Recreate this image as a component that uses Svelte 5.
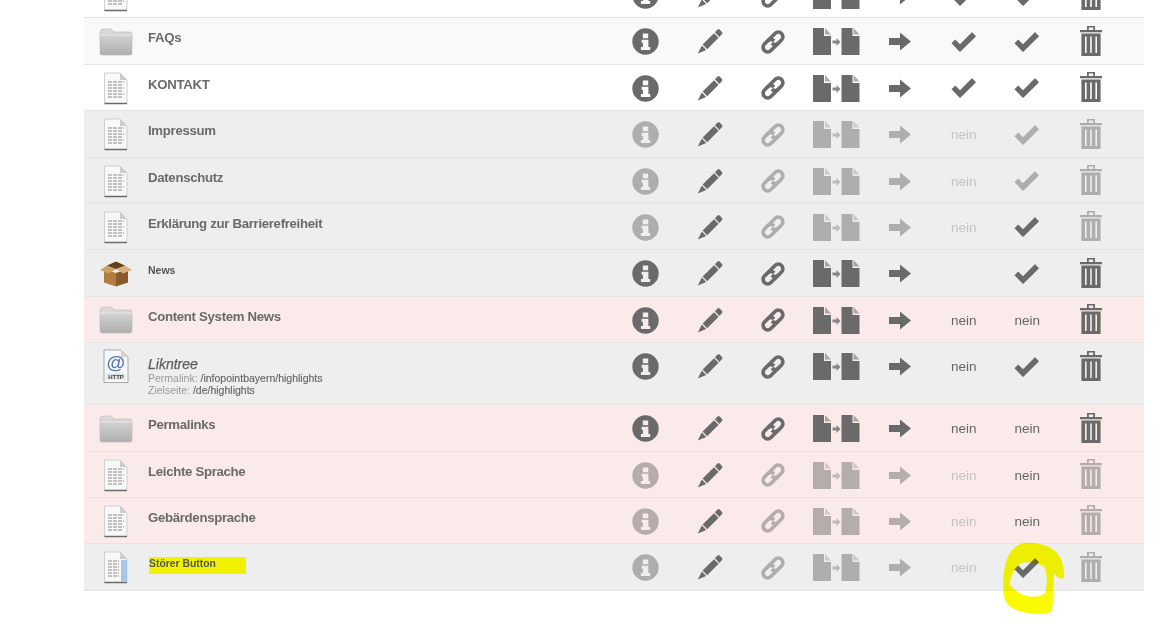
<script>
  const rows = [
    { icon: 'file', title: '', bg: 'white', dim: false, a: 'check', b: 'check' },
    { icon: 'folder', title: 'FAQs', bg: 'soft', dim: false, a: 'check', b: 'check' },
    { icon: 'file', title: 'KONTAKT', bg: 'white', dim: false, a: 'check', b: 'check' },
    { icon: 'file', title: 'Impressum', bg: 'gray', dim: true, a: 'neinoff', b: 'checkoff' },
    { icon: 'file', title: 'Datenschutz', bg: 'gray', dim: true, a: 'neinoff', b: 'checkoff' },
    { icon: 'file', title: 'Erklärung zur Barrierefreiheit', bg: 'gray', dim: true, a: 'neinoff', b: 'check' },
    { icon: 'box', title: 'News', bg: 'gray', dim: false, a: '', b: 'check', kind: 'small' },
    { icon: 'folder', title: 'Content System News', bg: 'pink', dim: false, a: 'nein', b: 'nein' },
    { icon: 'http', title: 'Likntree', bg: 'gray', dim: false, a: 'nein', b: 'check', kind: 'link' },
    { icon: 'folder', title: 'Permalinks', bg: 'pink', dim: false, a: 'nein', b: 'nein' },
    { icon: 'file', title: 'Leichte Sprache', bg: 'pink', dim: true, a: 'neinoff', b: 'nein' },
    { icon: 'file', title: 'Gebärdensprache', bg: 'pink', dim: true, a: 'neinoff', b: 'nein' },
    { icon: 'store', title: 'Störer Button', bg: 'gray', dim: true, a: 'neinoff', b: 'check', kind: 'mark' }
  ];
  const lines = [10, 13, 16, 19, 22, 25];
</script>

{#snippet typeIcon(kind)}
  {#if kind === 'folder'}
    <svg class="type" width="34" height="28" viewBox="0 0 34 28">
      <defs>
        <linearGradient id="fold" x1="0" y1="0" x2="0" y2="1">
          <stop offset="0" stop-color="#dedede" /><stop offset="1" stop-color="#aeaeae" />
        </linearGradient>
      </defs>
      <path d="M1 5Q1 1 4 1H12L15 4H31Q33 4 33 7V25Q33 27 31 27H3Q1 27 1 25Z" fill="url(#fold)" stroke="#b5b5b5" stroke-width=".6" />
      <path d="M1 7H33" stroke="#e8e8e8" />
    </svg>
  {:else if kind === 'box'}
    <svg class="type" width="34" height="26" viewBox="0 0 34 26">
      <path d="M5 8L17 12V25.5L5 21.5Z" fill="#b07c40" />
      <path d="M29 8L17 12V25.5L29 21.5Z" fill="#8a5a28" />
      <path d="M1 9L8 4.5L17 8L10 12.5Z" fill="#cda06a" />
      <path d="M33 9L26 4.5L17 8L24 12.5Z" fill="#d8b07c" />
      <path d="M8 4.5L17 .5L26 4.5L17 8Z" fill="#654018" />
    </svg>
  {:else if kind === 'http'}
    <svg class="type" width="26" height="35" viewBox="0 0 26 35">
      <path d="M1 1H18L25 8V33.5H1Z" fill="#f7f9fc" stroke="#a8a8a8" />
      <path d="M18 1L25 8H18Z" fill="#d4d4d4" />
      <text x="12.5" y="19.5" class="at">@</text>
      <rect x="3.5" y="24" width="19" height="7" fill="#e2e5ea" />
      <text x="13" y="30" class="http">HTTP</text>
    </svg>
  {:else}
    <svg class="type" width="26" height="33" viewBox="0 0 26 33">
      <path d="M1.5 1H17L24 8V31.5H1.5Z" fill="#f8f8f8" stroke="#cfcfcf" />
      <path d="M17 1L24 8H17Z" fill="#cccccc" />
      <path d="M1.5 31.5H24" stroke="#6a6a6a" stroke-width="1.5" />
      {#each lines as y, i}
        <path d={`M5 ${y}H${kind === 'store' ? 16 : i % 2 ? 20 : 21}`} stroke="#8a8a8a" stroke-dasharray="4 1" />
      {/each}
      {#if kind === 'store'}
        <rect x="18" y="9" width="6" height="22" fill="#a6c6e4" />
      {/if}
    </svg>
  {/if}
{/snippet}

{#snippet info()}
  <svg width="27" height="27" viewBox="0 0 27 27">
    <path fill-rule="evenodd" d="M13.5 .3a13.2 13.2 0 1 0 0 26.4a13.2 13.2 0 0 0 0-26.4ZM10.8 5.6h5.4v4.6h-5.4ZM9.6 11.8h6.8v7.2h1.8v3H8.9v-3h2v-4.2H9.6Z" />
  </svg>
{/snippet}

{#snippet pencil()}
  <svg class="nudge" width="26" height="27" viewBox="0 0 26 27">
    <path d="M5.6 17.6L17 6.2L21.6 10.8L10.2 22.2Z" />
    <path d="M17.9 5.3L20.6 2.6Q21.6 1.6 22.6 2.6L25 5Q26 6 25 7L22.4 9.9Z" />
    <path d="M4.8 18.6L9.2 23L.8 26.6Z" />
  </svg>
{/snippet}

{#snippet link()}
  <svg width="26" height="28" viewBox="0 0 26 28">
    <g transform="translate(13 14) rotate(-45)" fill="none" stroke-width="3.6" class="chain">
      <path d="M2.5 4.6H-7.5A4.6 4.6 0 0 1-7.5-4.6H-3A4.6 4.6 0 0 1 1.6 0" />
      <path d="M-2.5-4.6H7.5A4.6 4.6 0 0 1 7.5 4.6H3A4.6 4.6 0 0 1-1.6 0" />
    </g>
  </svg>
{/snippet}

{#snippet copy()}
  <svg width="47" height="27" viewBox="0 0 47 27">
    <path d="M0 0H11V8H18V27H0Z" />
    <path d="M12 0L18 6.5H12Z" opacity=".55" />
    <path d="M28.5 0H39.5V8H46.5V27H28.5Z" />
    <path d="M40.5 0L46.5 6.5H40.5Z" opacity=".55" />
    <path d="M19.5 12.5H23.5V10L27.5 14L23.5 18V15.5H19.5Z" opacity=".8" />
  </svg>
{/snippet}

{#snippet arrow()}
  <svg width="22" height="19" viewBox="0 0 22 19">
    <path d="M0 6H11V.5L22 9.5L11 18.5V13H0Z" />
  </svg>
{/snippet}

{#snippet check()}
  <svg width="25" height="20" viewBox="0 0 25 20">
    <path d="M.5 11.2L4.2 7.5L9 12.2L20.6.5Q21 .2 21.4 .6L24.6 3.8Q25 4.3 24.6 4.7L9.6 19.5Q9 20 8.4 19.5Z" />
  </svg>
{/snippet}

{#snippet trash()}
  <svg class="bin" width="22" height="30" viewBox="0 0 22 30">
    <path fill-rule="evenodd" d="M7 0H15V4H22V6.2H0V4H7ZM8.8 1.6V4H13.2V1.6Z" />
    <path fill-rule="evenodd" d="M1.4 7.6H20.6V30H1.4ZM5 10.5V27H6.6V10.5ZM10.2 10.5V27H11.8V10.5ZM15.4 10.5V27H17V10.5Z" />
  </svg>
{/snippet}

<main class="list">
  {#each rows as r}
    <section class={`row ${r.bg} ${r.kind === 'link' ? 'tall' : ''}`}>
      <div class="type-cell">{@render typeIcon(r.icon)}</div>
      <div class="title-cell">
        {#if r.kind === 'small'}
          <span class="small">{r.title}</span>
        {:else if r.kind === 'mark'}
          <span class="mark">{r.title}</span>
        {:else if r.kind === 'link'}
          <em class="name">{r.title}</em>
          <p class="meta">Permalink: <b>/infopointbayern/highlights</b></p>
          <p class="meta">Zielseite: <b>/de/highlights</b></p>
        {:else}
          <span class="name">{r.title}</span>
        {/if}
      </div>
      <div class="cell" class:off={r.dim}>{@render info()}</div>
      <div class="cell">{@render pencil()}</div>
      <div class="cell" class:off={r.dim}>{@render link()}</div>
      <div class="cell" class:off={r.dim}>{@render copy()}</div>
      <div class="cell" class:off={r.dim}>{@render arrow()}</div>
      <div class="cell">
        {#if r.a === 'check'}
          {@render check()}
        {:else if r.a === 'nein'}
          <span class="no">nein</span>
        {:else if r.a === 'neinoff'}
          <span class="no faint">nein</span>
        {/if}
      </div>
      <div class="cell" class:off={r.b === 'checkoff'}>
        {#if r.b === 'nein'}
          <span class="no">nein</span>
        {:else}
          {@render check()}
        {/if}
      </div>
      <div class="cell" class:off={r.dim}>{@render trash()}</div>
    </section>
  {/each}
</main>

<svg class="scribble" width="180" height="100" viewBox="0 0 540 300" aria-hidden="true">
  <path fill-rule="evenodd" d="M140 38C185 38 225 50 242 85C250 105 254 125 252 145C240 147 230 144 222 130C220 165 222 205 215 245C190 254 150 254 115 242C85 232 70 215 70 180C68 130 75 75 105 52C115 43 128 38 140 38ZM125 98C105 110 90 140 90 162C100 182 130 200 160 200C175 200 188 196 195 188C202 165 203 135 192 108C170 98 145 94 125 98Z" />
</svg>

<style>
  :global(body) {
    margin: 0;
    background: #fff;
    overflow: hidden;
  }
  .list {
    margin: -28px 0 0 84px;
    width: 1060px;
    font-family: "Liberation Sans", Arial, sans-serif;
    color: #666;
    filter: blur(.3px);
  }
  .row {
    display: grid;
    grid-template-columns: 64px 466px repeat(8, 63.5px) 1fr;
    box-sizing: border-box;
    height: 46.4px;
    border-bottom: 1px solid #e4e4e4;
  }
  .row.tall { height: 62px; }
  .white { background: #fff; }
  .soft { background: #f9f9f9; }
  .gray { background: #eee; }
  .pink { background: #fbeaea; }
  .type-cell, .cell {
    display: flex;
    align-items: center;
    justify-content: center;
    height: 47px;
  }
  .cell svg { fill: #6a6a6a; }
  .cell .chain { stroke: #6a6a6a; }
  .cell .bin { margin: 0 0 2px 1.5px; }
  .cell .nudge { margin: 0 0 2px 1px; }
  .off { opacity: .48; }
  .title-cell { padding-top: 12px; }
  .name {
    display: block;
    font-size: 13.2px;
    letter-spacing: -.3px;
    line-height: 16px;
    font-weight: bold;
    color: #6a6a6a;
  }
  em.name {
    font-size: 14px;
    letter-spacing: 0;
    font-weight: normal;
    font-style: italic;
    color: #5e5e5e;
    margin-top: 1px;
    -webkit-text-stroke: .25px #5e5e5e;
  }
  .small {
    display: block;
    font-size: 10.5px;
    line-height: 16px;
    font-weight: bold;
    color: #555;
  }
  .mark {
    display: block;
    box-sizing: border-box;
    width: 97px;
    height: 17px;
    margin: 1px 0 0 1px;
    background: #f2f200;
    font-size: 10.4px;
    line-height: 14px;
    font-weight: bold;
    color: #555;
  }
  .meta {
    margin: 0;
    font-size: 10.5px;
    line-height: 12px;
    color: #999;
  }
  .meta b { font-weight: normal; color: #666; -webkit-text-stroke: .15px #666; }
  .no { font-size: 13.5px; margin-left: 1px; color: #666; }
  .faint { color: #c4c4c4; }
  .at { font: italic bold 19px "Liberation Sans", sans-serif; fill: #5a7db0; text-anchor: middle; }
  .http { font: bold 6px "Liberation Sans", sans-serif; fill: #444; text-anchor: middle; }
  .scribble {
    position: absolute;
    left: 980px;
    top: 530px;
    fill: #fafa00;
    mix-blend-mode: darken;
  }
</style>
